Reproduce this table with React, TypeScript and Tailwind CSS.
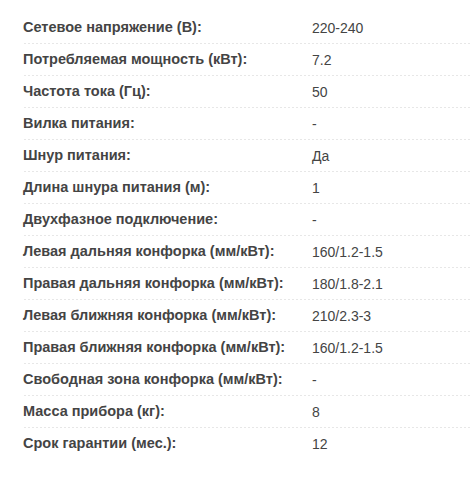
import React from "react";

const rows: [string, string][] = [
  ["Сетевое напряжение (В):", "220-240"],
  ["Потребляемая мощность (кВт):", "7.2"],
  ["Частота тока (Гц):", "50"],
  ["Вилка питания:", "-"],
  ["Шнур питания:", "Да"],
  ["Длина шнура питания (м):", "1"],
  ["Двухфазное подключение:", "-"],
  ["Левая дальняя конфорка (мм/кВт):", "160/1.2-1.5"],
  ["Правая дальняя конфорка (мм/кВт):", "180/1.8-2.1"],
  ["Левая ближняя конфорка (мм/кВт):", "210/2.3-3"],
  ["Правая ближняя конфорка (мм/кВт):", "160/1.2-1.5"],
  ["Свободная зона конфорка (мм/кВт):", "-"],
  ["Масса прибора (кг):", "8"],
  ["Срок гарантии (мес.):", "12"],
];

export default function App() {
  return (
    <div
      className="w-[471px] h-[500px] bg-white pt-[12px] pl-[22px] text-[#444]"
      style={{ fontFamily: '"Liberation Sans", Arial, sans-serif' }}
    >
      {rows.map(([k, v], i) => (
        <div
          key={i}
          className={
            i < rows.length - 1
              ? "flex h-[32px] items-center bg-[linear-gradient(to_right,#cfcfcf_1px,transparent_1px)] bg-[length:4px_1px] bg-repeat-x bg-bottom"
              : "flex h-[32px] items-center"
          }
        >
          <div className="w-[290px] pl-[1px] text-[14.5px] font-bold text-[#444]">{k}</div>
          <div className="text-[14px] text-[#444]">{v}</div>
        </div>
      ))}
    </div>
  );
}
